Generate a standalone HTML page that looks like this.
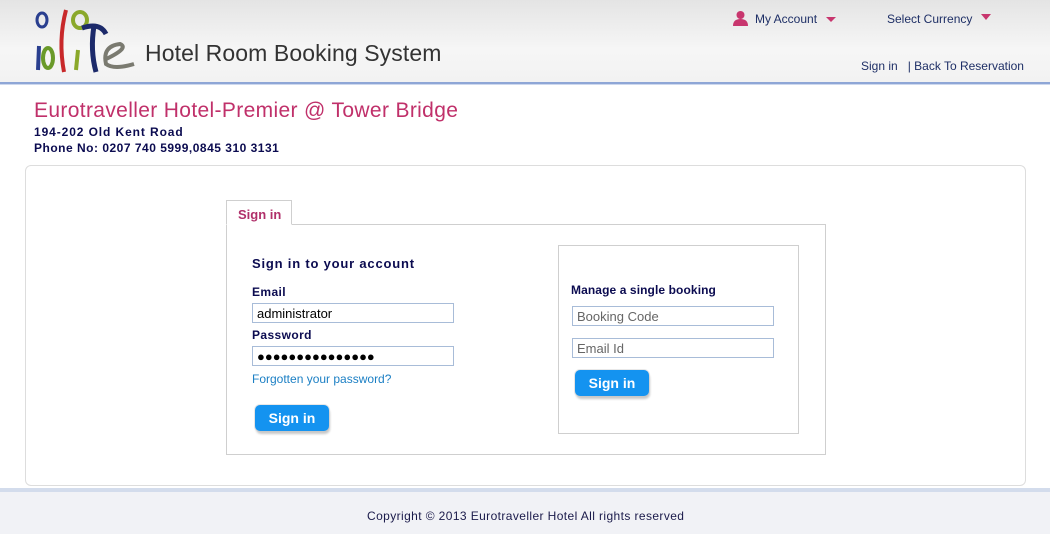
<!DOCTYPE html>
<html><head><meta charset="utf-8"><style>
*{box-sizing:border-box;margin:0;padding:0}
body{width:1050px;height:534px;overflow:hidden;background:#fff;font-family:"Liberation Sans",Arial,sans-serif;position:relative}
.hdr{position:absolute;left:0;top:0;width:1050px;height:82px;background:linear-gradient(#e4e4e4,#f6f6f6 60%,#f2f2f2)}
.hl{position:absolute;left:0;top:82px;width:1050px;height:3px;background:#8ea6d6;border-bottom:1px solid #cdd8ee}
.t{position:absolute;white-space:nowrap}
.box{position:absolute;border:1px solid #cfcfcf}
input{position:absolute;height:20px;border:1px solid #a8bcd8;font:13px "Liberation Sans",Arial,sans-serif;padding:0 4px;color:#000;background:#fff}
.btn{position:absolute;width:74px;height:26px;background:#1493f0;color:#fff;font-weight:bold;font-size:14px;text-align:center;line-height:26px;border-radius:5px;box-shadow:1px 3px 2px #c8c8c8,0 0 0 1px #e8e8e8}
.lbl{font-weight:bold;font-size:12px;color:#0b0b50;letter-spacing:0.4px}
</style></head><body>
<div class="hdr"></div><div class="hl"></div>
<svg class="t" style="left:30px;top:4px" width="110" height="72" viewBox="0 0 110 72">
<ellipse cx="12" cy="16" rx="5" ry="7" fill="none" stroke="#2a3f8f" stroke-width="3"/>
<path d="M9 42 L8 66" stroke="#2a3f8f" stroke-width="4" fill="none"/>
<ellipse cx="18" cy="54" rx="5" ry="10" fill="none" stroke="#6a9a2a" stroke-width="4"/>
<path d="M36 6 Q28 36 34 68" stroke="#c8282a" stroke-width="4" fill="none"/>
<ellipse cx="50" cy="16" rx="7" ry="8" fill="none" stroke="#8aa82a" stroke-width="4"/>
<path d="M48 46 L46 66" stroke="#8aa82a" stroke-width="4" fill="none"/>
<path d="M52 24 Q70 18 76 30 M64 22 Q60 46 66 68" stroke="#1c2a6a" stroke-width="5" fill="none"/>
<path d="M74 56 Q100 44 90 40 Q72 42 76 60 Q84 66 104 60" stroke="#7a7a70" stroke-width="4" fill="none"/>
</svg>
<div class="t" style="left:145px;top:40px;font-size:23px;color:#333;letter-spacing:0.1px">Hotel Room Booking System</div>
<svg class="t" style="left:732px;top:10px" width="17" height="16" viewBox="0 0 17 16"><circle cx="8.5" cy="5" r="4" fill="#c8366e"/><path d="M1 16 Q1 9 8.5 9 Q16 9 16 16Z" fill="#c8366e"/></svg>
<div class="t" style="left:755px;top:12px;font-size:12px;color:#1e2f66">My Account</div>
<div class="t" style="left:826px;top:17px;width:0;height:0;border:5px solid transparent;border-top:5px solid #c8366e"></div>
<div class="t" style="left:887px;top:12px;font-size:12px;color:#1e2f66">Select Currency</div>
<div class="t" style="left:981px;top:14px;width:0;height:0;border:5px solid transparent;border-top:6px solid #c8366e"></div>
<div class="t" style="left:861px;top:59px;font-size:12px;color:#1e2f66">Sign in &nbsp;&nbsp;| Back To Reservation</div>
<div class="t" style="left:34px;top:99px;font-size:21px;color:#c0306a;letter-spacing:0.35px">Eurotraveller Hotel-Premier @ Tower Bridge</div>
<div class="t lbl" style="left:34px;top:125px;letter-spacing:0.9px">194-202 Old Kent Road</div>
<div class="t lbl" style="left:34px;top:141px;letter-spacing:0.5px">Phone No: 0207 740 5999,0845 310 3131</div>
<div class="box" style="left:25px;top:165px;width:1001px;height:321px;border-color:#ddd;border-radius:6px"></div>
<div class="box" style="left:226px;top:224px;width:600px;height:231px"></div>
<div class="t" style="left:226px;top:200px;width:66px;height:25px;border:1px solid #cfcfcf;border-bottom:1px solid #fff;background:#fff;font-size:13px;font-weight:bold;color:#b0306a;padding:6px 0 0 11px">Sign in</div>
<div class="t" style="left:252px;top:256px;font-size:13px;font-weight:bold;color:#0b0b50;letter-spacing:0.8px">Sign in to your account</div>
<div class="t lbl" style="left:252px;top:285px">Email</div>
<input style="left:252px;top:303px;width:202px" value="administrator">
<div class="t lbl" style="left:252px;top:328px">Password</div>
<input style="left:252px;top:346px;width:202px;letter-spacing:0px" value="●●●●●●●●●●●●●●●">
<div class="t" style="left:252px;top:372px;font-size:12px;color:#1b7fc4">Forgotten your password?</div>
<div class="btn" style="left:255px;top:405px">Sign in</div>
<div class="box" style="left:558px;top:245px;width:241px;height:189px"></div>
<div class="t lbl" style="left:571px;top:283px;letter-spacing:0.1px">Manage a single booking</div>
<input style="left:572px;top:306px;width:202px;color:#666" value="Booking Code">
<input style="left:572px;top:338px;width:202px;color:#666" value="Email Id">
<div class="btn" style="left:575px;top:370px">Sign in</div>
<div class="t" style="left:0;top:488px;width:1050px;height:46px;background:#f1f2f6;border-top:4px solid #d3dcec"></div>
<div class="t" style="left:367px;top:509px;font-size:12px;color:#1a1a4a;letter-spacing:0.4px">Copyright © 2013 Eurotraveller Hotel All rights reserved</div>
</body></html>
